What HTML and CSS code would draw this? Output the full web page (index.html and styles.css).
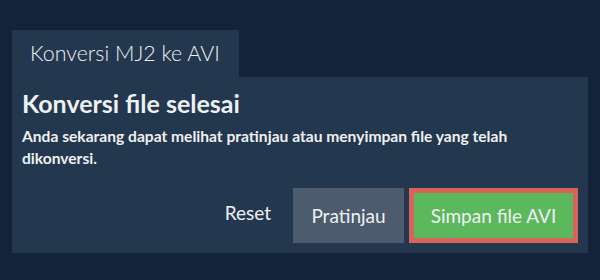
FILE: index.html
```html
<!DOCTYPE html>
<html lang="id">
<head>
<meta charset="utf-8">
<link rel="stylesheet" href="styles.css">
</head>
<body>
<div class="wrap">
  <div class="tab">Konversi MJ2 ke AVI</div>
  <div class="panel">
    <h1 class="title">Konversi file selesai</h1>
    <p class="desc">Anda sekarang dapat melihat pratinjau atau menyimpan file yang telah dikonversi.</p>
    <div class="actions">
      <button class="btn btn-link">Reset</button>
      <button class="btn btn-grey">Pratinjau</button>
      <button class="btn btn-save">Simpan file AVI</button>
    </div>
  </div>
</div>
</body>
</html>
```
FILE: styles.css
```css
html, body {
  margin: 0;
  padding: 0;
  background: #13233a;
  font-family: Lato, "Open Sans", sans-serif;
  color: #eef0f2;
}
.wrap {
  padding: 30px 12px 0 12px;
}
.tab {
  display: inline-block;
  background: #23374e;
  height: 47px;
  line-height: 47px;
  padding: 0 19px 0 18px;
  font-size: 21.4px;
  font-weight: 300;
}
.panel {
  background: #23374e;
  padding: 11px 10px 10px 10px;
}
.title {
  margin: 0;
  font-size: 25px;
  font-weight: 700;
  line-height: 30px;
}
.desc {
  margin: 7px 0 0 0;
  font-size: 15.6px;
  font-weight: 700;
  line-height: 22px;
}
.actions {
  display: flex;
  justify-content: flex-end;
  align-items: stretch;
  gap: 5px;
  margin-top: 19px;
}
.btn {
  font-family: Lato, "Open Sans", sans-serif;
  font-size: 19px;
  color: #eef0f2;
  border: none;
  height: 55px;
  cursor: pointer;
}
.btn-link {
  background: transparent;
  padding: 0 17px 0 0;
  position: relative;
  top: -3px;
}
.btn-grey {
  background: #4c5c6e;
  padding: 0;
  width: 111px;
}
.btn-save {
  background: #5cb85c;
  border: 5px solid #d9625b;
  width: 169px;
  padding: 0;
}
```
